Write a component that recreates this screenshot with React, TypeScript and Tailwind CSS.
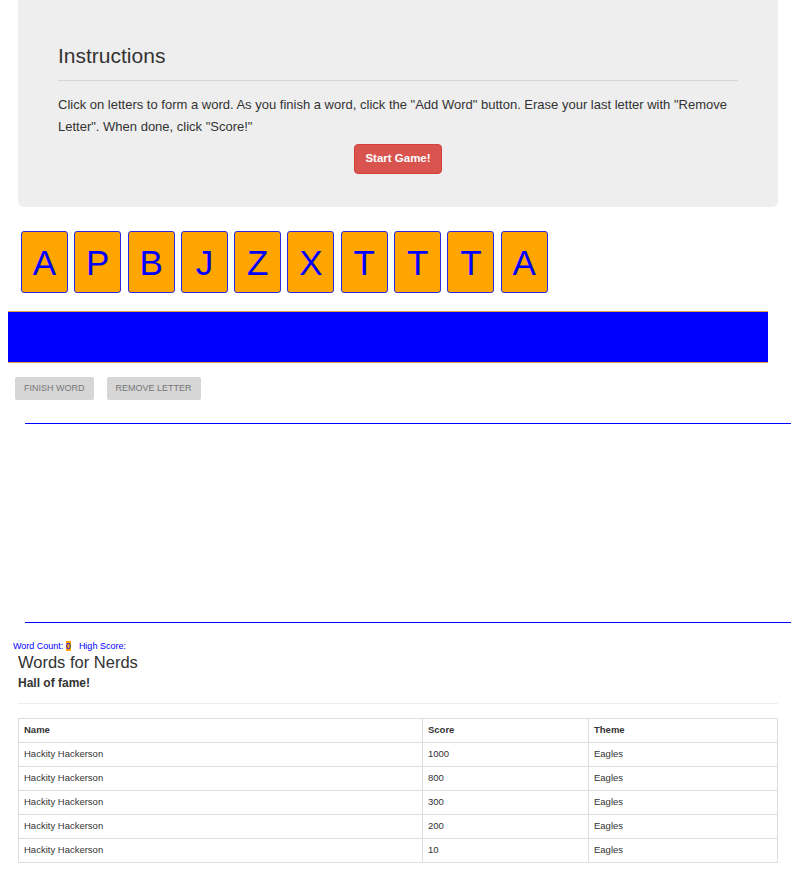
import React from "react";

const letters = ["A", "P", "B", "J", "Z", "X", "T", "T", "T", "A"];

const scores = [
  { name: "Hackity Hackerson", score: 1000, theme: "Eagles" },
  { name: "Hackity Hackerson", score: 800, theme: "Eagles" },
  { name: "Hackity Hackerson", score: 300, theme: "Eagles" },
  { name: "Hackity Hackerson", score: 200, theme: "Eagles" },
  { name: "Hackity Hackerson", score: 10, theme: "Eagles" },
];

function Instructions() {
  return (
    <div className="ml-[18px] mr-[13px] rounded-b-[6px] bg-[#eeeeee] px-[40px] pt-[44px] pb-[33px]">
      <h3 className="text-[21px] leading-[23px] text-[#333]">Instructions</h3>
      <hr className="mt-[13px] border-t border-[#d7d7d7]" />
      <p className="mt-[13px] text-[13px] leading-[22px] text-[#333]">
        Click on letters to form a word. As you finish a word, click the "Add Word" button. Erase your last letter with "Remove
        Letter". When done, click "Score!"
      </p>
      <div className="mt-[6px] flex justify-center">
        <button className="h-[30px] rounded-[4px] border border-[#d43f3a] bg-[#d9534f] px-[10px] text-[11.5px] font-bold text-white">
          Start Game!
        </button>
      </div>
    </div>
  );
}

function LetterTiles() {
  return (
    <div className="mt-[24px] ml-[21px] flex gap-[6.3px]">
      {letters.map((l, i) => (
        <div
          key={i}
          className="flex h-[62px] w-[47px] items-center justify-center rounded-[3px] border border-[#2a2ae0] bg-[#ffa500] text-[35px] leading-none text-[#0000ff]"
        >
          {l}
        </div>
      ))}
    </div>
  );
}

function Controls() {
  return (
    <div className="mt-[14px] ml-[15px] flex gap-[13px]">
      <button className="h-[23px] rounded-[2px] bg-[#d6d6d6] px-[9px] text-[9px] text-[#777]">FINISH WORD</button>
      <button className="h-[23px] rounded-[2px] bg-[#d6d6d6] px-[9px] text-[9px] text-[#777]">REMOVE LETTER</button>
    </div>
  );
}

function HallOfFame() {
  return (
    <div className="ml-[18px] mr-[13px]">
      <h2 className="mt-[1px] text-[16.5px] leading-[18px] text-[#333]">Words for Nerds</h2>
      <h4 className="mt-[6px] text-[12px] leading-[13px] font-bold text-[#333]">Hall of fame!</h4>
      <hr className="mt-[13px] border-t border-[#eeeeee]" />
      <table className="mt-[14px] w-full border-collapse border border-[#dddddd] text-[9.5px] text-[#333]">
        <thead>
          <tr className="h-[24px]">
            <th className="w-[404px] border border-[#dddddd] px-[5px] text-left font-bold">Name</th>
            <th className="w-[166px] border border-[#dddddd] px-[5px] text-left font-bold">Score</th>
            <th className="border border-[#dddddd] px-[5px] text-left font-bold">Theme</th>
          </tr>
        </thead>
        <tbody>
          {scores.map((s, i) => (
            <tr key={i} className="h-[24px]">
              <td className="border border-[#dddddd] px-[5px]">{s.name}</td>
              <td className="border border-[#dddddd] px-[5px]">{s.score}</td>
              <td className="border border-[#dddddd] px-[5px]">{s.theme}</td>
            </tr>
          ))}
        </tbody>
      </table>
    </div>
  );
}

export default function App() {
  return (
    <div className="min-h-screen overflow-hidden bg-white pb-[8px] font-['Liberation_Sans',Arial,sans-serif]">
      <Instructions />
      <LetterTiles />
      <div className="mt-[18px] ml-[8px] h-[52px] w-[760px] border-y border-[#e0a040] bg-[#0000ff]" />
      <Controls />
      <div className="mt-[23px] ml-[25px] h-[200px] border-y border-[#0000ff]" />
      <div className="mt-[18px] ml-[13px] text-[9px] leading-[11px] text-[#0000ff]">
        Word Count: <span className="bg-[#ffa500]">0</span>
        <span className="ml-[8px]">High Score:</span>
      </div>
      <HallOfFame />
    </div>
  );
}
